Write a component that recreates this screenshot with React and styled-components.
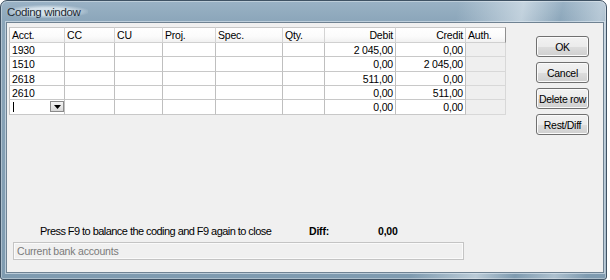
import React from "react";
import styled, { createGlobalStyle } from "styled-components";

const GlobalStyle = createGlobalStyle`
  html, body { margin: 0; padding: 0; background: #ffffff; }
  body { font-family: "Liberation Sans", Arial, sans-serif; }
`;

const Window = styled.div`
  width: 607px;
  height: 280px;
  box-sizing: border-box;
  display: flex;
  flex-direction: column;
  padding: 0 2px 6px 5px;
  border: 1px solid #3f5264;
  border-radius: 7px 7px 3px 3px;
  background:
    linear-gradient(100deg, rgba(255,255,255,0) 70%, rgba(235,242,247,0.55) 80%, rgba(255,255,255,0) 86%, rgba(230,238,244,0.45) 92%, rgba(255,255,255,0) 97%),
    linear-gradient(180deg, #9ab2c5 0px, #8aa5b9 22px, #7f9bb0 100%);
  box-shadow: inset 0 0 0 1px rgba(255,255,255,0.35);
`;

const TitleBar = styled.div`
  height: 21px;
  display: flex;
  align-items: center;
`;

const Title = styled.span`
  font-family: "Liberation Sans", Arial, sans-serif;
  font-size: 11.5px;
  letter-spacing: -0.35px;
  color: #1e2a33;
  padding: 1px 8px 0 1px;
  background: radial-gradient(ellipse at center, rgba(220,231,239,0.9) 40%, rgba(205,219,229,0) 75%);
`;

const Client = styled.div`
  flex: 1;
  display: flex;
  flex-direction: column;
  background: #f0f0f0;
  border: 1px solid #6f8292;
  box-shadow: 0 0 0 1px rgba(225,235,243,0.6);
  padding: 4px 14px 12px 2px;
`;

const Top = styled.div`
  flex: 1;
  display: flex;
  justify-content: space-between;
  align-items: flex-start;
`;

const Table = styled.div`
  display: grid;
  grid-template-columns: 56px 50px 48px 53px 67px 42px 71px 70px 40px;
  grid-template-rows: 16px 14px 15px 14px 14px 15px;
  font-size: 10.5px;
  letter-spacing: -0.2px;
  color: #000;
`;

const Cell = styled.div`
  box-sizing: border-box;
  display: flex;
  align-items: center;
  justify-content: ${(p) => (p.$right ? "flex-end" : "flex-start")};
  padding: 0 2px 0 2px;
  white-space: nowrap;
  overflow: hidden;
  position: relative;
  background: ${(p) => (p.$auth ? "#efefef" : "#ffffff")};
  border-right: 1px solid ${(p) => (p.$auth ? "#d8d8d8" : "#bfbfbf")};
  border-bottom: 1px solid ${(p) => (p.$auth ? "#d8d8d8" : "#c8c8c8")};
  border-left: ${(p) => (p.$first ? "1px solid #bfbfbf" : "none")};
`;

const HeadCell = styled(Cell)`
  background: linear-gradient(180deg, #ffffff 0%, #fbfbfb 60%, #f1f1f1 100%);
  border-top: 1px solid #c8c8c8;
  border-bottom: 1px solid #d0d0d0;
  border-right: 1px solid ${(p) => (p.$last ? "#8f8f8f" : "#d4d4d4")};
`;

const Caret = styled.span`
  width: 1px;
  height: 10px;
  background: #000;
  margin-left: 1px;
`;

const DropButton = styled.span`
  position: absolute;
  right: 0;
  top: 1px;
  width: 14px;
  height: 11px;
  box-sizing: border-box;
  border: 1px solid #8a8a8a;
  background: linear-gradient(180deg, #f4f4f4, #d8d8d8);
  display: flex;
  align-items: center;
  justify-content: center;
`;

const Buttons = styled.div`
  display: flex;
  flex-direction: column;
  gap: 5px;
  margin-top: 9px;
`;

const Button = styled.button`
  width: 53px;
  height: 21px;
  box-sizing: border-box;
  padding: 0;
  white-space: nowrap;
  font-family: "Liberation Sans", Arial, sans-serif;
  font-size: 10.5px;
  letter-spacing: -0.3px;
  color: #000;
  border: 1px solid #707070;
  border-radius: 3px;
  background: linear-gradient(180deg, #f2f2f2 0%, #ebebeb 50%, #dddddd 51%, #cfcfcf 100%);
  box-shadow: inset 0 0 0 1px #fbfbfb;
`;

const Message = styled.div`
  display: grid;
  grid-template-columns: 269px 69px auto;
  padding-left: 31px;
  font-size: 11px;
  letter-spacing: -0.55px;
  white-space: nowrap;
  color: #000;
  height: 14px;
  align-items: center;
  margin-bottom: 4px;
`;

const Bold = styled.span`
  font-weight: bold;
  font-size: 10.5px;
  letter-spacing: -0.2px;
`;

const Status = styled.div`
  margin-left: 4px;
  width: 451px;
  height: 18px;
  box-sizing: border-box;
  border: 1px solid #c4c4c4;
  box-shadow: inset 0 0 0 1px #fafafa;
  background: #f0f0f0;
  font-size: 10.5px;
  letter-spacing: -0.2px;
  color: #7a7a7a;
  display: flex;
  align-items: center;
  padding-left: 3px;
`;

const headers = [
  { t: "Acct." },
  { t: "CC" },
  { t: "CU" },
  { t: "Proj." },
  { t: "Spec." },
  { t: "Qty." },
  { t: "Debit", right: true },
  { t: "Credit", right: true },
  { t: "Auth." },
];

const rows = [
  ["1930", "2 045,00", "0,00"],
  ["1510", "0,00", "2 045,00"],
  ["2618", "511,00", "0,00"],
  ["2610", "0,00", "511,00"],
  [null, "0,00", "0,00"],
];

function Row({ acct, debit, credit }) {
  return (
    <>
      <Cell $first>
        {acct === null ? (
          <>
            <Caret />
            <DropButton>
              <svg width="7" height="4" viewBox="0 0 7 4">
                <path d="M0 0h7L3.5 4z" fill="#000" />
              </svg>
            </DropButton>
          </>
        ) : (
          acct
        )}
      </Cell>
      <Cell />
      <Cell />
      <Cell />
      <Cell />
      <Cell />
      <Cell $right>{debit}</Cell>
      <Cell $right>{credit}</Cell>
      <Cell $auth />
    </>
  );
}

export default function App() {
  return (
    <>
      <GlobalStyle />
      <Window>
        <TitleBar>
          <Title>Coding window</Title>
        </TitleBar>
        <Client>
          <Top>
            <Table>
              {headers.map((h, i) => (
                <HeadCell
                  key={h.t}
                  $first={i === 0}
                  $right={h.right}
                  $last={i === headers.length - 1}
                >
                  {h.t}
                </HeadCell>
              ))}
              {rows.map((r, i) => (
                <Row key={i} acct={r[0]} debit={r[1]} credit={r[2]} />
              ))}
            </Table>
            <Buttons>
              <Button>OK</Button>
              <Button>Cancel</Button>
              <Button>Delete row</Button>
              <Button>Rest/Diff</Button>
            </Buttons>
          </Top>
          <Message>
            <span>Press F9 to balance the coding and F9 again to close</span>
            <Bold>Diff:</Bold>
            <Bold>0,00</Bold>
          </Message>
          <Status>Current bank accounts</Status>
        </Client>
      </Window>
    </>
  );
}
